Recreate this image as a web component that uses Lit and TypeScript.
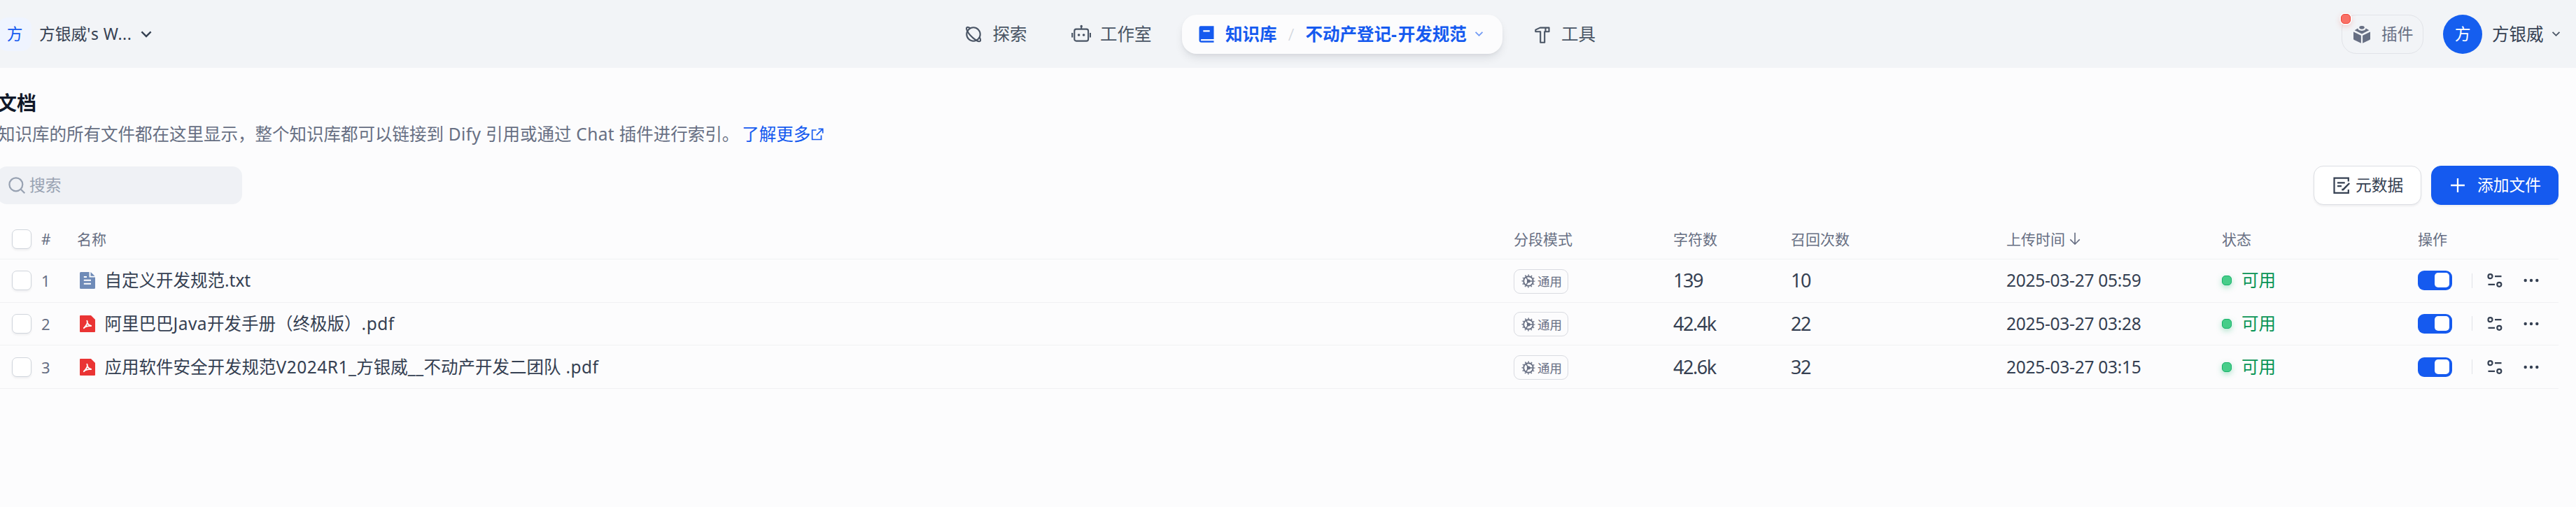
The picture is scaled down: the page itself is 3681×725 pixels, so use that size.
import { LitElement, html, css, svg } from 'lit';
import { customElement, property, state } from 'lit/decorators.js';

interface DocumentRow {
  id: number;
  type: 'txt' | 'pdf';
  name: unknown;
  chars: string;
  hits: number;
  uploaded: string;
}

const latin = (text: string) => html`<span class="latin">${text}</span>`;

const icons: Record<string, { box: string; body: unknown }> = {
  planet: {
    box: '0 0 28 28',
    body: svg`
      <g fill="none" stroke="currentColor" stroke-width="2.1">
        <circle cx="14" cy="14" r="9.7" />
        <path d="M9.500 5.400C6 3.200 3.300 3.200 4.200 6.800C5.200 10.600 8.800 15.200 13 18.900C17.400 22.700 22 25.100 23.600 23.700C24.500 22.900 24.100 20.900 22.700 18.200" />
      </g>`,
  },
  robot: {
    box: '0 0 28 28',
    body: svg`
      <g fill="none" stroke="currentColor" stroke-width="2.1">
        <rect x="4.300" y="6.600" width="19.800" height="17" rx="2.600" />
        <path d="M14.200 6V2.500M1.200 12v6.500M27 12v6.500" />
      </g>
      <g fill="currentColor">
        <circle cx="14.200" cy="2.400" r="1.700" />
        <circle cx="10.600" cy="15" r="1.800" />
        <circle cx="17.600" cy="15" r="1.800" />
      </g>`,
  },
  book: {
    box: '0 0 24 24',
    body: svg`<path fill="currentColor" fill-rule="evenodd" d="M21 18H6a1 1 0 0 0 0 2h15v2H6a3 3 0 0 1-3-3V4a2 2 0 0 1 2-2h16v16ZM16 9V7H8v2h8Z" />`,
  },
  hammer: {
    box: '0 0 28 28',
    body: svg`
      <g fill="none" stroke="currentColor" stroke-width="2.1" stroke-linejoin="round">
        <path d="M10.700 4.600H23.500V10.200H17.200V25.700H11.200V10.200H4.300V7.600L10.700 4.600Z" />
        <path d="M18.500 4.600V10.200" />
      </g>`,
  },
  chevron: {
    box: '0 0 24 24',
    body: svg`<path fill="currentColor" d="M12 13.170L16.950 8.220L18.360 9.640L12 16L5.640 9.640L7.050 8.220Z" />`,
  },
  cube: {
    box: '0 0 28 28',
    body: svg`
      <g fill="currentColor">
        <path d="M2 10.400L12.900 15.700V26.700L2.900 21.900Q2 21.400 2 20.400Z" />
        <path d="M26 10.400L15.100 15.700V26.700L25.100 21.900Q26 21.400 26 20.400Z" />
        <path d="M3.700 8.200L8.300 5.600Q8.600 8.700 14 8.900Q19.400 8.700 19.700 5.600L24.300 8.200L14 13.600Z" />
        <ellipse cx="14" cy="4.300" rx="3.700" ry="2.400" />
      </g>`,
  },
  search: {
    box: '0 0 24 24',
    body: svg`<g fill="none" stroke="currentColor" stroke-width="1.900"><circle cx="11" cy="11" r="8.100" /><path d="M16.700 16.700L21.700 21.700" /></g>`,
  },
  external: {
    box: '0 0 20 20',
    body: svg`<path fill="none" stroke="currentColor" stroke-width="1.700" d="M8.500 4H2.600V17.500H15.500V11.500M11.500 2.300H17.700V8.500M17.500 2.500L8.600 11.400" />`,
  },
  metadata: {
    box: '0 0 28 28',
    body: svg`
      <g fill="none" stroke="currentColor" stroke-width="2.200">
        <path d="M23.800 8.500V3.700H3.500V24.900H23.800V20" />
        <path d="M8 10.400H18.700M8 15.200H14" />
        <path d="M25.200 11L16.200 20.200H15.500V18.800" stroke-width="2.400" />
      </g>`,
  },
  plus: {
    box: '0 0 24 24',
    body: svg`<path fill="currentColor" d="M11 11V3.500H13V11H20.500V13H13V20.500H11V13H3.500V11Z" />`,
  },
  sort: {
    box: '0 0 24 24',
    body: svg`<path fill="currentColor" d="M13 18.200L19.400 11.800L20.800 13.200L12 22L3.200 13.200L4.600 11.800L11 18.200V1H13Z" />`,
  },
  txt: {
    box: '0 0 22 24',
    body: svg`
      <path fill="#6f8bb8" d="M1.500 0H13.500V7.500H22V22.500Q22 24 20.500 24H1.500Q0 24 0 22.500V1.500Q0 0 1.500 0ZM15.500 0L21.500 5.800H15.500Z" />
      <path fill="#fff" d="M5.800 6H10V8H5.800ZM5.800 10.700H16V12.700H5.800ZM5.800 15.700H16V17.700H5.800Z" />`,
  },
  pdf: {
    box: '0 0 22 24',
    body: svg`
      <path fill="#ea3434" d="M1 0H16L22 6V23Q22 24 21 24H1Q0 24 0 23V1Q0 0 1 0Z" />
      <path fill="none" stroke="#fff" stroke-width="1.900" stroke-linecap="round" stroke-linejoin="round" d="M10.300 7.800Q11.400 8.800 10.500 11.500Q9.300 14.700 6 18.200M10.800 11Q12.300 13.800 16.200 15M6 17.800Q9.500 14.900 16 14.900" />`,
  },
  general: {
    box: '0 0 20 20',
    body: svg`
      <circle cx="10" cy="10" r="6.800" fill="none" stroke="currentColor" stroke-width="1.900" />
      <circle cx="10" cy="10" r="8.500" fill="none" stroke="currentColor" stroke-width="1.900" stroke-dasharray="1.500 2.950" stroke-dashoffset=".75" />
      <path fill="none" stroke="currentColor" stroke-width="1.500" d="M10 10H16.500M10 10L6.600 4.200M10 10L6.600 15.800" />
      <circle cx="10.300" cy="10" r="2.500" fill="currentColor" />`,
  },
  settings: {
    box: '0 0 22 20',
    body: svg`
      <g fill="none" stroke="currentColor" stroke-width="2.200">
        <circle cx="4.500" cy="4.200" r="3" /><circle cx="17.300" cy="15.800" r="3" />
        <path d="M11 4.200H20.500M1.500 15.800H11" />
      </g>`,
  },
  more: {
    box: '0 0 22 6',
    body: svg`<g fill="currentColor"><circle cx="2.700" cy="3" r="2.200" /><circle cx="11" cy="3" r="2.200" /><circle cx="19.300" cy="3" r="2.200" /></g>`,
  },
};

@customElement('ui-icon')
export class UiIcon extends LitElement {
  static styles = css`
    :host {
      display: inline-block;
      flex: none;
    }
    svg {
      display: block;
      width: 100%;
      height: 100%;
    }
  `;

  @property() name = '';

  render() {
    const icon = icons[this.name];
    return html`<svg viewBox=${icon.box}>${icon.body}</svg>`;
  }
}

@customElement('app-header')
export class AppHeader extends LitElement {
  static styles = css`
    :host {
      display: flex;
      align-items: center;
      box-sizing: border-box;
      height: 97px;
      padding-right: 18px;
      background: #f2f4f7;
      color: #495464;
      font-size: 24.5px;
      line-height: 36px;
      white-space: nowrap;
    }
    .workspace {
      display: flex;
      align-items: center;
      width: 1380px;
      margin-left: -3px;
      color: #354052;
      font-size: 22.75px;
    }
    .workspace-logo {
      display: grid;
      place-items: center;
      width: 48px;
      height: 48px;
      margin-right: 11px;
      border-radius: 14px;
      background: #eff4ff;
      color: #155aef;
    }
    .workspace .latin {
      letter-spacing: 0.024em;
    }
    .workspace ui-icon {
      margin-left: 7px;
    }
    .icon {
      width: 28px;
      height: 28px;
    }
    .small {
      width: 21px;
      height: 21px;
    }
    .item {
      display: flex;
      align-items: center;
      gap: 13.5px;
    }
    .studio {
      margin-left: 63px;
    }
    .active {
      box-sizing: border-box;
      width: 458px;
      height: 56px;
      margin: 0 43px 0 43px;
      padding-left: 21px;
      border-radius: 21px;
      background: #fcfcfd;
      box-shadow: 0 7px 14px -3px rgba(16, 24, 40, 0.12), 0 2px 5px -1px rgba(16, 24, 40, 0.05);
      color: #155aef;
      font-weight: 700;
    }
    .slash {
      width: 14px;
      color: #d0d5dc;
      font-weight: 300;
      text-align: center;
    }
    .dash {
      letter-spacing: 0.08em;
    }
    .active .small {
      margin-left: -6px;
      opacity: 0.6;
    }
    .plugins {
      position: relative;
      display: flex;
      align-items: center;
      box-sizing: border-box;
      width: 117px;
      height: 56px;
      margin-left: auto;
      padding-left: 14px;
      gap: 14px;
      border: 1px solid #e1e3e8;
      border-radius: 21px;
      color: #676f83;
      font-size: 22.75px;
    }
    .alert {
      position: absolute;
      top: -2px;
      left: -2px;
      width: 12px;
      height: 12px;
      border: 1px solid #f04438;
      border-radius: 5px;
      background: #f97066;
      box-shadow: 0 0 0 1.5px #fcfcfd, 0 3px 8px rgba(240, 68, 56, 0.3);
    }
    .avatar {
      display: grid;
      place-items: center;
      width: 56px;
      height: 56px;
      margin: 0 14px 0 28px;
      border-radius: 50%;
      background: #155eef;
      color: #fff;
      font-size: 22.75px;
    }
    .user {
      margin-right: 7.5px;
      color: #354052;
    }
  `;

  render() {
    return html`
      <div class="workspace">
        <div class="workspace-logo">方</div>
        <span>方银威${latin("'s W...")}</span>
        <ui-icon class="icon" name="chevron"></ui-icon>
      </div>
      <div class="item"><ui-icon class="icon" name="planet"></ui-icon>探索</div>
      <div class="item studio"><ui-icon class="icon" name="robot"></ui-icon>工作室</div>
      <div class="item active">
        <ui-icon class="icon" name="book"></ui-icon>知识库
        <span class="slash">/</span>
        <span>不动产登记<span class="dash">-</span>开发规范</span>
        <ui-icon class="small" name="chevron"></ui-icon>
      </div>
      <div class="item"><ui-icon class="icon" name="hammer"></ui-icon>工具</div>
      <div class="plugins">
        <span class="alert"></span>
        <ui-icon class="icon" name="cube"></ui-icon>插件
      </div>
      <div class="avatar">方</div>
      <span class="user">方银威</span>
      <ui-icon class="small" name="chevron"></ui-icon>
    `;
  }
}

@customElement('document-table')
export class DocumentTable extends LitElement {
  static styles = css`
    :host {
      display: block;
      color: #354052;
      font-size: 24.5px;
      line-height: 34px;
      white-space: nowrap;
    }
    .row {
      display: grid;
      grid-template-columns: 17px 42px 51px 2053px 228px 168px 308px 308px 280px 1fr;
      align-items: center;
      box-sizing: border-box;
      height: 61.67px;
      border-bottom: 1px solid #f0f1f3;
    }
    .head {
      height: 57px;
      color: #676f83;
      font-size: 21px;
    }
    .check {
      box-sizing: border-box;
      width: 28px;
      height: 28px;
      border: 1px solid #d0d5dc;
      border-radius: 7px;
      background: #fff;
      box-shadow: 0 2px 3px rgba(16, 24, 40, 0.06);
    }
    .index {
      color: #676f83;
      font-size: 22px;
    }
    .name,
    .status,
    .actions,
    .sortable {
      display: flex;
      align-items: center;
    }
    .name ui-icon {
      width: 22px;
      height: 24px;
      margin: 0 13.5px 0 4px;
    }
    .name .latin {
      letter-spacing: 0.02em;
    }
    .date {
      letter-spacing: -0.011em;
    }
    .sortable ui-icon {
      width: 20px;
      height: 20px;
      margin-left: 4px;
    }
    .mode {
      display: inline-flex;
      align-items: center;
      box-sizing: border-box;
      width: 78px;
      height: 35px;
      padding-left: 10px;
      gap: 3px;
      border: 1px solid #d9dbe1;
      border-radius: 9px;
      color: #676f83;
      font-size: 17.5px;
      vertical-align: middle;
    }
    .mode ui-icon {
      width: 20px;
      height: 20px;
    }
    .count {
      font-size: 27px;
      letter-spacing: -0.055em;
    }
    .status {
      color: #079455;
    }
    .dot {
      box-sizing: border-box;
      width: 14px;
      height: 14px;
      margin-right: 14px;
      border: 1px solid #17b26a;
      border-radius: 5px;
      background: #47cd89;
      box-shadow: 0 3px 8px rgba(23, 178, 106, 0.35);
    }
    .toggle {
      display: flex;
      justify-content: flex-end;
      box-sizing: border-box;
      width: 49px;
      height: 28px;
      padding: 3px 4px;
      border-radius: 9px;
      background: #155aef;
    }
    .knob {
      width: 21px;
      height: 21px;
      border-radius: 5px;
      background: #fff;
    }
    .divider {
      width: 1px;
      height: 21px;
      margin: 0 21px 0 28px;
      background: #e1e3e8;
    }
    .settings {
      width: 22px;
      height: 20px;
    }
    .more {
      width: 22px;
      height: 6px;
      margin-left: 30px;
    }
  `;

  @property({ attribute: false }) rows: DocumentRow[] = [];

  renderRow(row: DocumentRow) {
    return html`
      <div class="row">
        <span></span>
        <span class="check"></span>
        <span class="index">${row.id}</span>
        <div class="name"><ui-icon name=${row.type}></ui-icon><span>${row.name}</span></div>
        <div><span class="mode"><ui-icon name="general"></ui-icon>通用</span></div>
        <span class="count">${row.chars}</span>
        <span class="count">${row.hits}</span>
        <span class="date">${row.uploaded}</span>
        <div class="status"><span class="dot"></span>可用</div>
        <div class="actions">
          <span class="toggle"><span class="knob"></span></span>
          <span class="divider"></span>
          <ui-icon class="settings" name="settings"></ui-icon>
          <ui-icon class="more" name="more"></ui-icon>
        </div>
      </div>
    `;
  }

  render() {
    return html`
      <div class="row head">
        <span></span>
        <span class="check"></span>
        <span>#</span>
        <span>名称</span>
        <span>分段模式</span>
        <span>字符数</span>
        <span>召回次数</span>
        <div class="sortable">上传时间<ui-icon name="sort"></ui-icon></div>
        <span>状态</span>
        <span>操作</span>
      </div>
      ${this.rows.map((row) => this.renderRow(row))}
    `;
  }
}

@customElement('app-root')
export class AppRoot extends LitElement {
  static styles = css`
    :host {
      display: block;
      height: 725px;
      overflow: hidden;
      background: #fcfcfd;
      font-family: 'Noto Sans', 'Noto Sans CJK SC', sans-serif;
    }
    .page {
      padding: 29px 25px 0 0;
      white-space: nowrap;
    }
    .title {
      margin: 0 0 0 -4px;
      color: #101828;
      font-size: 28px;
      font-weight: 700;
      line-height: 42px;
    }
    .intro {
      display: flex;
      align-items: center;
      margin: 6px 0 0 -3px;
      gap: 4px;
      color: #676f83;
      font-size: 24.5px;
      line-height: 36px;
    }
    .intro .latin {
      letter-spacing: 0.015em;
    }
    .link {
      display: flex;
      align-items: center;
      color: #155aef;
    }
    .link ui-icon {
      width: 20px;
      height: 20px;
    }
    .toolbar {
      display: flex;
      align-items: center;
      margin-top: 27px;
      font-size: 22.75px;
      line-height: 34px;
    }
    .search {
      display: flex;
      align-items: center;
      box-sizing: border-box;
      width: 350px;
      height: 54px;
      margin: 0 auto 0 -4px;
      padding-left: 14px;
      gap: 4px;
      border-radius: 14px;
      background: #eff1f5;
      color: #98a2b2;
    }
    .icon {
      width: 28px;
      height: 28px;
    }
    .button {
      display: flex;
      align-items: center;
      box-sizing: border-box;
      height: 56px;
      border: 1px solid #dcdee3;
      border-radius: 14px;
      background: #fff;
      box-shadow: 0 2px 3px rgba(16, 24, 40, 0.06);
      color: #354052;
    }
    .metadata {
      width: 154px;
      padding-left: 25px;
      gap: 6px;
    }
    .add {
      width: 182px;
      margin-left: 14px;
      padding-left: 23px;
      gap: 14px;
      border-color: #155aef;
      background: #155aef;
      color: #fff;
    }
    document-table {
      margin-top: 21px;
    }
  `;

  @state() private rows: DocumentRow[] = [
    { id: 1, type: 'txt', name: html`自定义开发规范.txt`, chars: '139', hits: 10, uploaded: '2025-03-27 05:59' },
    { id: 2, type: 'pdf', name: html`阿里巴巴${latin('Java')}开发手册（终极版）${latin('.pdf')}`, chars: '42.4k', hits: 22, uploaded: '2025-03-27 03:28' },
    { id: 3, type: 'pdf', name: html`应用软件安全开发规范${latin('V2024R1_')}方银威${latin('__')}不动产开发二团队${latin(' .pdf')}`, chars: '42.6k', hits: 32, uploaded: '2025-03-27 03:15' },
  ];

  render() {
    return html`
      <app-header></app-header>
      <div class="page">
        <h1 class="title">文档</h1>
        <div class="intro">
          <span>知识库的所有文件都在这里显示，整个知识库都可以链接到${latin(' Dify ')}引用或通过${latin(' Chat ')}插件进行索引。</span>
          <a class="link">了解更多<ui-icon name="external"></ui-icon></a>
        </div>
        <div class="toolbar">
          <div class="search"><ui-icon class="icon" name="search"></ui-icon>搜索</div>
          <div class="button metadata"><ui-icon class="icon" name="metadata"></ui-icon>元数据</div>
          <div class="button add"><ui-icon class="icon" name="plus"></ui-icon>添加文件</div>
        </div>
        <document-table .rows=${this.rows}></document-table>
      </div>
    `;
  }
}
